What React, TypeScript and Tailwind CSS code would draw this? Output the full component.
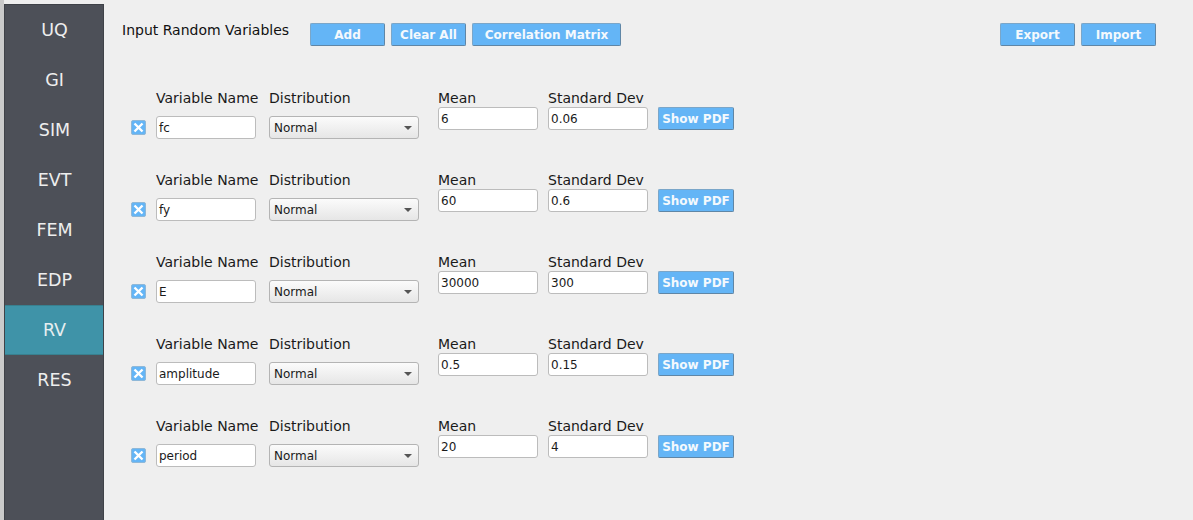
import React from 'react';

const tabs = ['UQ', 'GI', 'SIM', 'EVT', 'FEM', 'EDP', 'RV', 'RES'];

const variables = [
  { name: 'fc', mean: '6', dev: '0.06' },
  { name: 'fy', mean: '60', dev: '0.6' },
  { name: 'E', mean: '30000', dev: '300' },
  { name: 'amplitude', mean: '0.5', dev: '0.15' },
  { name: 'period', mean: '20', dev: '4' },
];

function BlueButton({ label, className }: { label: string; className: string }) {
  return (
    <button className={`h-[23px] rounded-[2px] border border-[#7aa6c9] border-r-[#5f86a6] border-b-[#5f86a6] bg-[#64b5f6] text-center text-[12px] leading-[20px] font-bold text-[#f4f9fd] ${className}`}>
      {label}
    </button>
  );
}

function TextBox({ value }: { value: string }) {
  return (
    <div className="h-[23px] w-[100px] rounded-[3px] border border-[#bcbcbc] bg-white pl-[2px] text-[12px] leading-[22px] text-[#1a1a1a]">
      {value}
    </div>
  );
}

function VariableRow({ name, mean, dev }: { name: string; mean: string; dev: string }) {
  return (
    <div className="flex h-[82px] items-start">
      {/* remove checkbox */}
      <div className="mt-[30px] ml-[27px] flex h-[15px] w-[15px] items-center justify-center rounded-[2px] border border-[#8fb8d8] bg-[#64b5f6]">
        <svg width="11" height="11" viewBox="0 0 11 11">
          <path d="M1.5 1.5 L9.5 9.5 M9.5 1.5 L1.5 9.5" stroke="#ffffff" strokeWidth="2.4" />
        </svg>
      </div>
      <div className="ml-[10px] w-[100px]">
        <div className="mb-[9px] text-[14px] leading-[17px] whitespace-nowrap text-[#1a1a1a]">Variable Name</div>
        <TextBox value={name} />
      </div>
      <div className="ml-[13px] w-[150px]">
        <div className="mb-[9px] text-[14px] leading-[17px] text-[#1a1a1a]">Distribution</div>
        <div className="flex h-[23px] items-center justify-between rounded-[3px] border border-[#b4b4b4] bg-gradient-to-b from-[#fbfbfb] to-[#e6e6e6] pt-[1px] pr-[6px] pl-[4px] text-[12px] text-[#1a1a1a]">
          <span>Normal</span>
          <span className="h-0 w-0 border-x-[4px] border-t-[4px] border-x-transparent border-t-[#555555]" />
        </div>
      </div>
      <div className="ml-[19px] w-[100px]">
        <div className="text-[14px] leading-[17px] text-[#1a1a1a]">Mean</div>
        <TextBox value={mean} />
      </div>
      <div className="ml-[10px] w-[100px]">
        <div className="text-[14px] leading-[17px] whitespace-nowrap text-[#1a1a1a]">Standard Dev</div>
        <TextBox value={dev} />
      </div>
      <BlueButton label="Show PDF" className="mt-[17px] ml-[10px] w-[76px]" />
    </div>
  );
}

export default function App() {
  return (
    <div className="flex h-[520px] w-[1193px] overflow-hidden bg-[#efefef] font-['DejaVu_Sans',sans-serif]">
      <div className="w-[4px] shrink-0 bg-[#cbcbcb]" />
      <div className="mt-[4px] w-[100px] shrink-0 border-x border-t border-[#3f4248] bg-[#4d5058]">
        {tabs.map((tab) => (
          <div
            key={tab}
            className={
              tab === 'RV'
                ? 'flex h-[50px] items-center justify-center border-y border-[#38808f] bg-[#3f93a8] pt-[1px] pl-[1px] text-[17.5px] text-[#e6eef0]'
                : 'flex h-[50px] items-center justify-center pt-[1px] pl-[1px] text-[17.5px] text-[#eeeeee]'
            }
          >
            {tab}
          </div>
        ))}
      </div>
      <div className="flex-1">
        <div className="flex h-[90px] items-start pt-[22px]">
          <div className="ml-[18px] w-[188px] text-[14px] leading-[17px] text-[#111111]">Input Random Variables</div>
          <div className="mt-[1px] flex gap-[6px]">
            <BlueButton label="Add" className="w-[75px]" />
            <BlueButton label="Clear All" className="w-[75px]" />
            <BlueButton label="Correlation Matrix" className="w-[149px]" />
          </div>
          <div className="mt-[1px] ml-[379px] flex gap-[6px]">
            <BlueButton label="Export" className="w-[75px]" />
            <BlueButton label="Import" className="w-[75px]" />
          </div>
        </div>
        <div className="flex flex-col">
          {variables.map((v) => (
            <VariableRow key={v.name} name={v.name} mean={v.mean} dev={v.dev} />
          ))}
        </div>
      </div>
    </div>
  );
}
